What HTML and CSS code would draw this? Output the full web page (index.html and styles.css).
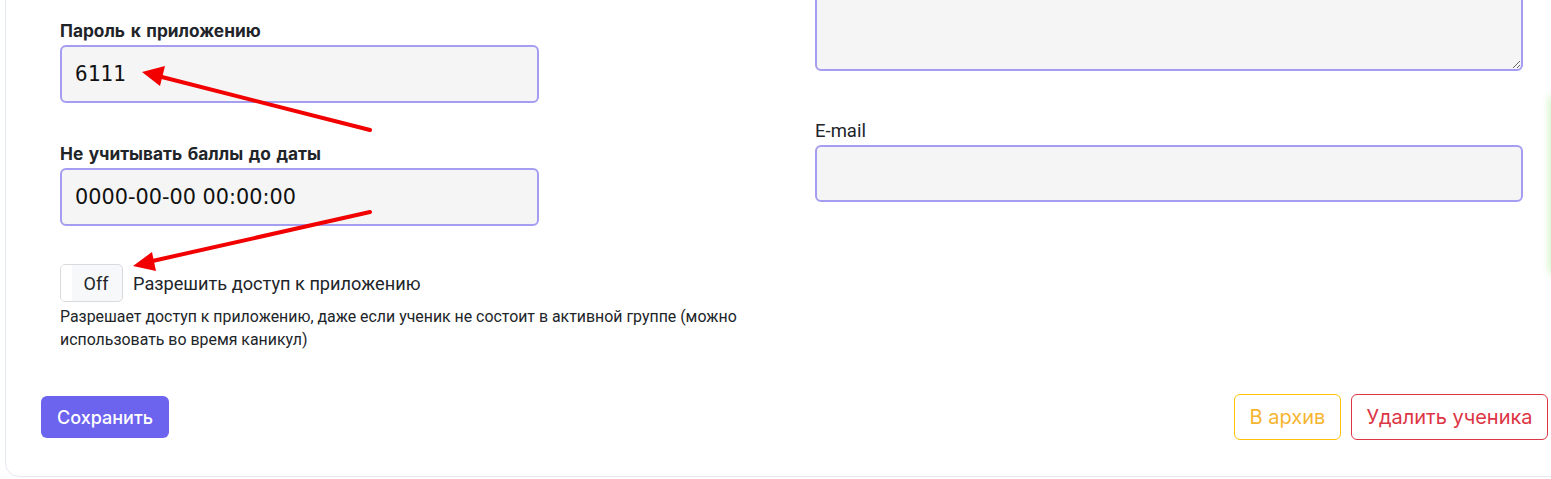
FILE: index.html
```html
<!DOCTYPE html>
<html lang="ru">
<head>
<meta charset="utf-8">
<title>Ученик</title>
<link rel="stylesheet" href="styles.css">
</head>
<body>
<div class="card">
  <div class="grid">
    <div class="col col-left">
      <div class="field">
        <label class="label label-bold">Пароль к приложению</label>
        <input class="input input-mono" type="text" value="6111">
      </div>
      <div class="field">
        <label class="label label-bold">Не учитывать баллы до даты</label>
        <input class="input input-date" type="text" value="0000-00-00 00:00:00">
      </div>
      <div class="switch-row">
        <div class="toggle"><span class="toggle-handle"></span><span class="toggle-text">Off</span></div>
        <span class="switch-label">Разрешить доступ к приложению</span>
      </div>
      <p class="help">Разрешает доступ к приложению, даже если ученик не состоит в активной группе (можно использовать во время каникул)</p>
    </div>
    <div class="col col-right">
      <textarea class="input textarea"></textarea>
      <div class="field field-email">
        <label class="label label-regular">E-mail</label>
        <input class="input input-email" type="text" value="">
      </div>
    </div>
  </div>
  <div class="footer">
    <button class="btn btn-primary">Сохранить</button>
    <div class="actions">
      <button class="btn btn-outline-warning">В архив</button>
      <button class="btn btn-outline-danger">Удалить ученика</button>
    </div>
  </div>
</div>
<div class="glow"></div>
<svg class="annotations" width="1551" height="479" viewBox="0 0 1551 479">
  <line x1="370" y1="130" x2="158" y2="76" stroke="#f20000" stroke-width="4" stroke-linecap="round"/>
  <polygon points="142,72 165,66 160,86" fill="#f20000"/>
  <line x1="370" y1="212" x2="148" y2="262" stroke="#f20000" stroke-width="4" stroke-linecap="round"/>
  <polygon points="133,266 152,252 156,271" fill="#f20000"/>
</svg>
</body>
</html>
```

FILE: styles.css
```css
* { box-sizing: border-box; }

html, body {
  margin: 0;
  padding: 0;
  background: #ffffff;
  overflow: hidden;
  width: 1551px;
  height: 479px;
}

body {
  position: relative;
  font-family: "Roboto", "Liberation Sans", sans-serif;
  color: #212529;
}

.card {
  margin: -61px 0 0 5px;
  width: 1576px;
  border: 1px solid #e4e8f1;
  border-radius: 14px;
  background: #fff;
  padding: 0 0 36px 0;
}

.grid {
  display: grid;
  grid-template-columns: 755px 708px;
  padding-left: 54px;
}

.col-left {
  padding-top: 79px;
}

.field {
  display: flex;
  flex-direction: column;
}

.field + .field {
  margin-top: 39px;
}

.label {
  line-height: 24px;
  margin-bottom: 2px;
}

.label-bold {
  font-family: "Inter", "Noto Sans", sans-serif;
  font-weight: 700;
  font-size: 17.3px;
  word-spacing: 1.5px;
  color: #212529;
}

.label-regular {
  font-family: "Roboto", "Noto Sans", sans-serif;
  font-size: 18.5px;
  color: #212529;
}

.input {
  display: block;
  width: 479px;
  height: 58px;
  border: 2px solid #a59df1;
  border-radius: 6px;
  background: #f5f5f5;
  padding: 0 13px;
  color: #111;
  outline: none;
}

.input-mono {
  font-family: "DejaVu Sans Mono", monospace;
  font-size: 21px;
}

.input-date {
  font-family: "DejaVu Sans", sans-serif;
  font-size: 20.8px;
}

.switch-row {
  display: flex;
  align-items: center;
  margin-top: 38px;
}

.toggle {
  position: relative;
  width: 63px;
  height: 38px;
  border: 1px solid #d8dadd;
  border-radius: 5px;
  background: #f7f8fa;
  display: flex;
  align-items: center;
  overflow: hidden;
}

.toggle-handle {
  width: 11px;
  height: 100%;
  background: #ffffff;
}

.toggle-text {
  flex: 1;
  text-align: center;
  font-size: 18px;
  color: #212529;
  padding-right: 2px;
}

.switch-label {
  margin-left: 10px;
  font-size: 18.2px;
  color: #212529;
}

.help {
  margin: 3px 0 0 0;
  font-size: 15.9px;
  line-height: 23px;
  width: 745px;
  color: #212529;
}

.textarea {
  width: 708px;
  height: 131px;
  resize: both;
}

.field-email {
  margin-top: 48px;
}

.input-email {
  width: 708px;
  height: 57px;
}

.footer {
  display: flex;
  justify-content: space-between;
  align-items: center;
  padding: 0 32px 0 35px;
  margin-top: 43px;
}

.actions {
  display: flex;
  gap: 10px;
}

.btn {
  font-family: "Inter", "Noto Sans", sans-serif;
  cursor: pointer;
  background: #fff;
}

.btn-primary {
  height: 42px;
  width: 128px;
  border: none;
  border-radius: 6px;
  background: #6c63ef;
  color: #fff;
  font-size: 18px;
  font-weight: 500;
}

.btn-outline-warning,
.btn-outline-danger {
  height: 46px;
  border-radius: 6px;
  font-size: 20px;
  padding: 0;
}

.btn-outline-warning {
  width: 107px;
  border: 1px solid #ffc107;
  color: #f6b530;
}

.btn-outline-danger {
  width: 197px;
  border: 1px solid #dc3545;
  color: #dc3545;
}

.glow {
  position: absolute;
  left: 1553px;
  top: 100px;
  width: 10px;
  height: 170px;
  background: #c8f5b8;
  box-shadow: 0 0 8px 3px rgba(150, 235, 120, 0.55);
}

.annotations {
  position: absolute;
  left: 0;
  top: 0;
  pointer-events: none;
}
```
